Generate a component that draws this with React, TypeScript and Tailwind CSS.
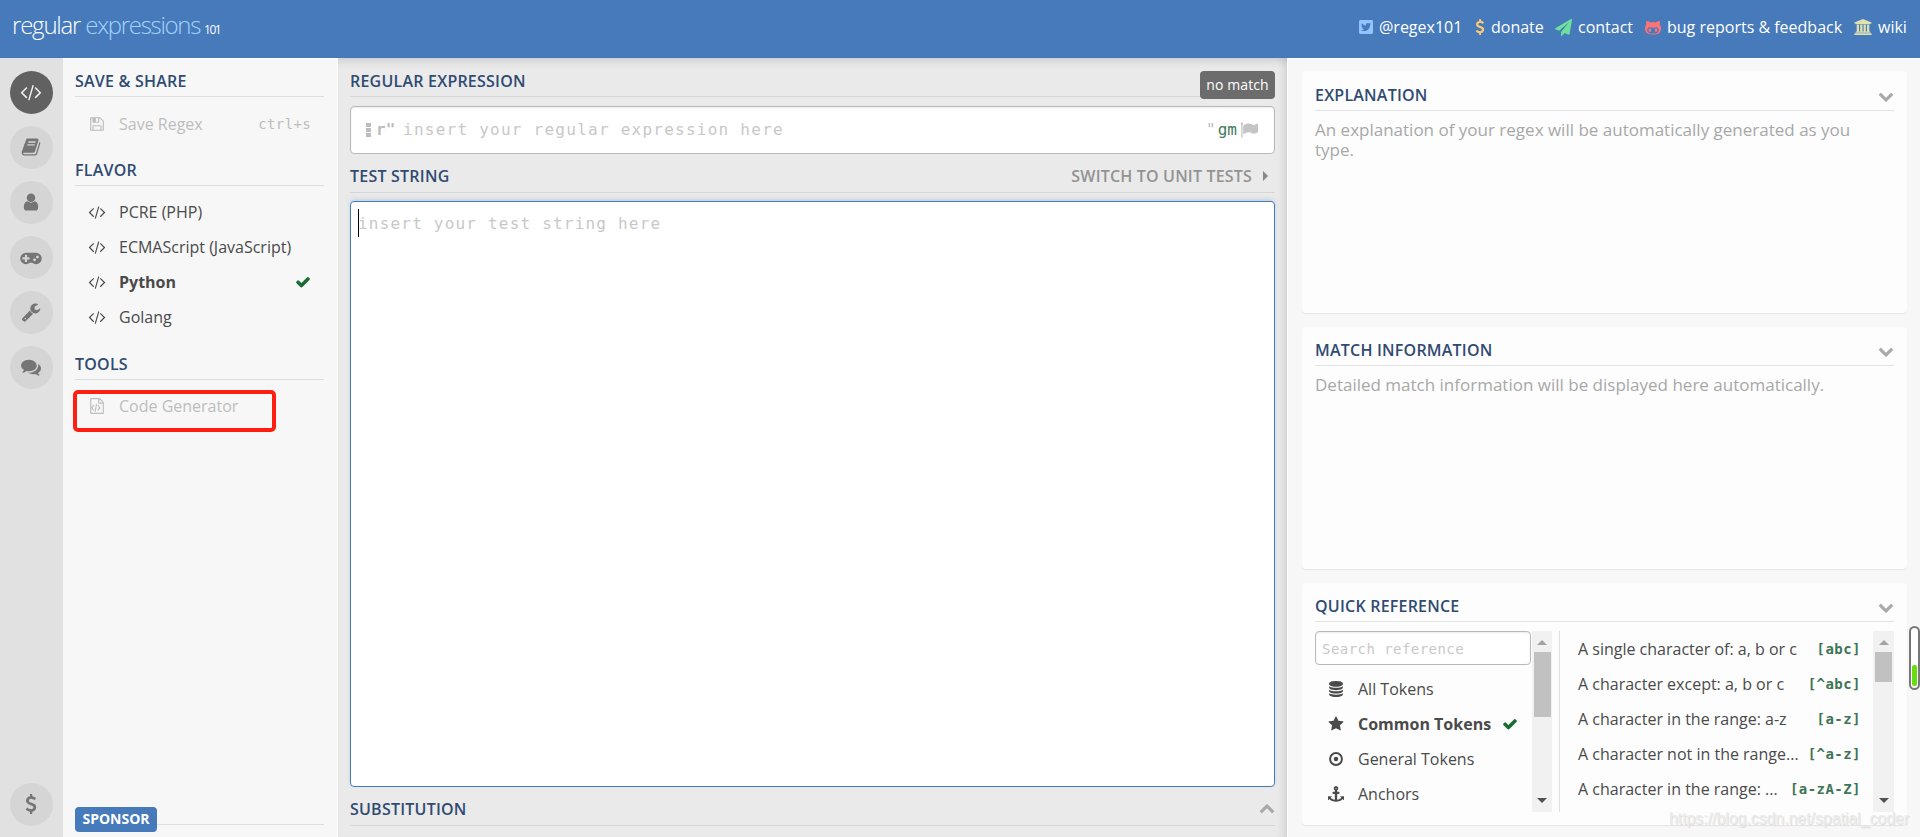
import React from "react";
import { FaTwitterSquare } from "react-icons/fa";

const paths = {
  code: "M553 1399l-50 50q-10 10-23 10t-23-10l-466-466q-10-10-10-23t10-23l466-466q10-10 23-10t23 10l50 50q10 10 10 23t-10 23l-393 393 393 393q10 10 10 23t-10 23zm591-1067l-373 1291q-4 13-15.5 19.5t-23.5 2.5l-62-17q-13-4-19.5-15.5t-2.5-24.5l373-1291q4-13 15.5-19.5t23.5-2.5l62 17q13 4 19.5 15.5t2.5 24.5zm657 651l-466 466q-10 10-23 10t-23-10l-50-50q-10-10-10-23t10-23l393-393-393-393q-10-10-10-23t10-23l50-50q10-10 23-10t23 10l466 466q10 10 10 23t-10 23z",
  book: "M1703 478q40 57 18 129l-275 906q-19 64-76.5 107.5t-122.5 43.5h-923q-77 0-148.5-53.5t-99.5-131.5q-24-67-2-127 0-4 3-27t4-37q1-8-3-21.5t-3-19.5q2-11 8-21t16.5-23.5 16.5-23.5q23-38 45-91.5t30-91.5q3-10 .5-30t-.5-28q3-11 17-28t17-23q21-36 42-92t25-90q1-9-2.5-32t.5-28q4-13 22-30.5t22-22.5q19-26 42.5-84.5t27.5-96.5q1-8-3-25.5t-2-26.5q2-8 9-18t18-23 17-21q8-12 16.5-30.5t15-35 16-36 19.5-32 26.5-23.5 36-11.5 47.5 5.5l-1 3q38-9 51-9h761q74 0 114 56t18 130l-274 906q-36 119-71.5 153.5t-128.5 34.5h-869q-27 0-38 15-11 16-1 43 24 70 144 70h923q29 0 56-15.5t35-41.5l300-987q7-22 5-57 38 15 59 43zm-1064 2q-4 13 2 22.5t20 9.5h608q13 0 25.5-9.5t16.5-22.5l21-64q4-13-2-22.5t-20-9.5h-608q-13 0-25.5 9.5t-16.5 22.5zm-83 256q-4 13 2 22.5t20 9.5h608q13 0 25.5-9.5t16.5-22.5l21-64q4-13-2-22.5t-20-9.5h-608q-13 0-25.5 9.5t-16.5 22.5z",
  user: "M1536 1399q0 109-62.5 187t-150.5 78h-854q-88 0-150.5-78t-62.5-187q0-85 8.5-160.5t31.5-152 58.5-131 94-89 134.5-34.5q131 128 313 128t313-128q76 0 134.5 34.5t94 89 58.5 131 31.5 152 8.5 160.5zm-256-887q0 159-112.5 271.5t-271.5 112.5-271.5-112.5-112.5-271.5 112.5-271.5 271.5-112.5 271.5 112.5 112.5 271.5z",
  gamepad: "M832 1088v-128q0-14-9-23t-23-9h-192v-192q0-14-9-23t-23-9h-128q-14 0-23 9t-9 23v192h-192q-14 0-23 9t-9 23v128q0 14 9 23t23 9h192v192q0 14 9 23t23 9h128q14 0 23-9t9-23v-192h192q14 0 23-9t9-23zm576 64q0-53-37.5-90.5t-90.5-37.5-90.5 37.5-37.5 90.5 37.5 90.5 90.5 37.5 90.5-37.5 37.5-90.5zm256-256q0-53-37.5-90.5t-90.5-37.5-90.5 37.5-37.5 90.5 37.5 90.5 90.5 37.5 90.5-37.5 37.5-90.5zm256 128q0 212-150 362t-362 150q-192 0-338-128h-220q-146 128-338 128-212 0-362-150t-150-362 150-362 362-150h896q212 0 362 150t150 362z",
  wrench: "M448 1472q0-26-19-45t-45-19-45 19-19 45 19 45 45 19 45-19 19-45zm644-420l-682 682q-37 37-90 37-52 0-91-37l-106-108q-38-36-38-90 0-53 38-91l681-681q39 98 114.5 173.5t173.5 114.5zm634-435q0 39-23 106-47 134-164.5 217.5t-258.5 83.5q-185 0-316.5-131.5t-131.5-316.5 131.5-316.5 316.5-131.5q58 0 121.5 16.5t107.5 46.5q16 11 16 28t-16 28l-293 169v224l193 107q5-3 79-48.5t135.5-81 70.5-35.5q15 0 23.5 10t8.5 25z",
  comments: "M1408 768q0 139-94 257t-256.5 186.5-353.5 68.5q-86 0-176-16-124 88-278 128-36 9-86 16h-3q-11 0-20.5-8t-11.5-21q-1-3-1-6.5t.5-6.5 2-6l2.5-5 3.5-5.5 4-5 4.5-5 4-4.5q5-6 23-25t26-29.5 22.5-29 25-38.5 20.5-44q-124-72-195-177t-71-224q0-139 94-257t256.5-186.5 353.5-68.5 353.5 68.5 256.5 186.5 94 257zm384 256q0 120-71 224.5t-195 176.5q10 24 20.5 44t25 38.5 22.5 29 26 29.5 23 25q1 1 4 4.5t4.5 5 4 5 3.5 5.5l2.5 5 2 6 .5 6.5-1 6.5q-3 14-13 22t-22 7q-50-7-86-16-154-40-278-128-90 16-176 16-271 0-472-132 58 4 88 4 161 0 309-45t264-129q125-92 192-212t67-254q0-77-23-152 129 71 204 178t75 230z",
  dollar: "M1362 1185q0 153-99.5 263.5t-258.5 136.5v175q0 14-9 23t-23 9h-135q-13 0-22.5-9.5t-9.5-22.5v-175q-66-9-127.5-31t-101.5-44.5-74-48-46.5-37.5-17.5-18q-17-21-2-41l103-135q7-10 23-12 15-2 24 9l2 2q113 99 243 125 37 8 74 8 81 0 142.5-43t61.5-122q0-28-15-53t-33.5-42-58.5-37.5-66-32-80-32.5q-39-16-61.5-25t-61.5-26.5-62.5-31-56.5-35.5-53.5-42.5-43.5-49-35.5-58-21-66.5-8.5-78q0-138 98-242t255-134v-180q0-13 9.5-22.5t22.5-9.5h135q14 0 23 9t9 23v176q57 6 110.5 23t87 33.5 63.5 37.5 39 29 15 14q17 18 5 38l-81 146q-8 15-23 16-14 3-27-7-3-3-14.5-12t-39-26.5-58.5-32-74.5-26-85.5-11.5q-95 0-155 43t-60 111q0 26 8.5 48t29.5 41.5 39.5 33 56 31 60.5 27 70 27.5q53 20 81 31.5t76 35 75.5 42.5 62 50 53 63.5 31.5 76.5 13 94z",
  save: "M512 1536h768v-384h-768v384zm896 0h128v-896q0-14-10-38.5t-20-34.5l-281-281q-10-10-34-20t-39-10v416q0 40-28 68t-68 28h-576q-40 0-68-28t-28-68v-416h-128v1280h128v-416q0-40 28-68t68-28h832q40 0 68 28t28 68v416zm-384-928v-320q0-13-9.5-22.5t-22.5-9.5h-192q-13 0-22.5 9.5t-9.5 22.5v320q0 13 9.5 22.5t22.5 9.5h192q13 0 22.5-9.5t9.5-22.5zm640 32v928q0 40-28 68t-68 28h-1344q-40 0-68-28t-28-68v-1344q0-40 28-68t68-28h928q40 0 88 20t76 48l280 280q28 28 48 76t20 88z",
  fileCode: "M1596 380q28 28 48 76t20 88v1152q0 40-28 68t-68 28h-1344q-40 0-68-28t-28-68v-1600q0-40 28-68t68-28h896q40 0 88 20t76 48zm-444-244v376h376q-10-29-22-41l-313-313q-12-12-41-22zm384 1528v-1024h-416q-40 0-68-28t-28-68v-416h-768v1536h1280zm-1056-896q8-11 21-12.5t24 6.5l51 38q11 8 12.5 21t-6.5 24l-182 243 182 243q8 11 6.5 24t-12.5 21l-51 38q-11 8-24 6.5t-21-12.5l-226-301q-14-19 0-38zm802 301q14 19 0 38l-226 301q-8 11-21 12.5t-24-6.5l-51-38q-11-8-12.5-21t6.5-24l182-243-182-243q-8-11-6.5-24t12.5-21l51-38q11-8 24-6.5t21 12.5zm-620 461q-13-2-20.5-13t-5.5-24l138-831q2-13 13-20.5t24-5.5l63 10q13 2 20.5 13t5.5 24l-138 831q-2 13-13 20.5t-24 5.5z",
  check: "M1671 566q0 40-28 68l-724 724-136 136q-28 28-68 28t-68-28l-136-136-362-362q-28-28-28-68t28-68l136-136q28-28 68-28t68 28l294 295 656-657q28-28 68-28t68 28l136 136q28 28 28 68z",
  chevron: "M1683 808l-742 741q-19 19-45 19t-45-19l-742-741q-19-19-19-45.5t19-45.5l166-165q19-19 45-19t45 19l531 531 531-531q19-19 45-19t45 19l166 165q19 19 19 45.5t-19 45.5z",
  star: "M1728 647q0 22-26 48l-363 354 86 500q1 7 1 20 0 21-10.5 35.5t-30.5 14.5q-19 0-40-12l-449-236-449 236q-22 12-40 12-21 0-31.5-14.5t-10.5-35.5q0-6 2-20l86-500-364-354q-25-27-25-48 0-37 56-46l502-73 225-455q19-41 49-41t49 41l225 455 502 73q56 9 56 46z",
  database: "M896 768q237 0 443-43t325-127v170q0 69-103 128t-280 93.5-385 34.5-385-34.5-280-93.5-103-128v-170q119 84 325 127t443 43zm0 768q237 0 443-43t325-127v170q0 69-103 128t-280 93.5-385 34.5-385-34.5-280-93.5-103-128v-170q119 84 325 127t443 43zm0-384q237 0 443-43t325-127v170q0 69-103 128t-280 93.5-385 34.5-385-34.5-280-93.5-103-128v-170q119 84 325 127t443 43zm0-1152q208 0 385 34.5t280 93.5 103 128v128q0 69-103 128t-280 93.5-385 34.5-385-34.5-280-93.5-103-128v-128q0-69 103-128t280-93.5 385-34.5z",
  plane: "M1764 11q33 24 27 64l-256 1536q-5 29-32 45-14 8-31 8-11 0-24-5l-453-185-242 295q-18 23-49 23-13 0-22-4-19-7-30.5-23.5t-11.5-36.5v-349l864-1059-1069 925-395-162q-37-14-40-55-2-40 32-59l1664-960q15-9 32-9 20 0 36 11z",
  github: "M640 1216q0 40-12.5 82t-43 76-72.5 34-72.5-34-43-76-12.5-82 12.5-82 43-76 72.5-34 72.5 34 43 76 12.5 82zm640 0q0 40-12.5 82t-43 76-72.5 34-72.5-34-43-76-12.5-82 12.5-82 43-76 72.5-34 72.5 34 43 76 12.5 82zm160 0q0-120-69-204t-187-84q-41 0-195 21-71 11-157 11t-157-11q-152-21-195-21-118 0-187 84t-69 204q0 88 32 153.5t81 103 122 60 140 29.5 149 7h168q82 0 149-7t140-29.5 122-60 81-103 32-153.5zm224-176q0 207-61 331-38 77-105.5 133t-141 86-170 47.5-171.5 22-167 4.5q-78 0-142-3t-147.5-12.5-152.5-30-137-51.5-121-81-86-115q-62-123-62-331 0-237 136-396-27-82-27-170 0-116 51-218 108 0 190 39.5t189 123.5q147-35 309-35 148 0 280 32 105-82 187-121t189-39q51 102 51 218 0 87-27 168 136 160 136 398z",
  university: "M832 0l960 384v128h-128q0 26-20.5 45t-48.5 19h-1526q-28 0-48.5-19t-20.5-45h-128v-128zm-704 640h256v768h128v-768h256v768h128v-768h256v768h128v-768h256v768h59q28 0 48.5 19t20.5 45v64h-1664v-64q0-26 20.5-45t48.5-19h59v-768zm1595 960q28 0 48.5 19t20.5 45v128h-1920v-128q0-26 20.5-45t48.5-19h1782z",
  anchor: "M960 256q0-26-19-45t-45-19-45 19-19 45 19 45 45 19 45-19 19-45zm832 928v352q0 22-20 30-8 2-12 2-12 0-23-9l-93-93q-119 143-318.5 226.5t-429.5 83.5-429.5-83.5-318.5-226.5l-93 93q-9 9-23 9-4 0-12-2-20-8-20-30v-352q0-14 9-23t23-9h352q22 0 30 20 8 19-7 35l-100 100q67 91 189.5 153.5t271.5 82.5v-647h-192q-26 0-45-19t-19-45v-128q0-26 19-45t45-19h192v-163q-58-34-93-92.5t-35-128.5q0-106 75-181t181-75 181 75 75 181q0 70-35 128.5t-93 92.5v163h192q26 0 45 19t19 45v128q0 26-19 45t-45 19h-192v647q149-20 271.5-82.5t189.5-153.5l-100-100q-15-16-7-35 8-20 30-20h352q14 0 23 9t9 23z",
  flag: "M320 256q0 72-64 110v1266q0 13-9.5 22.5t-22.5 9.5h-64q-13 0-22.5-9.5t-9.5-22.5v-1266q-64-38-64-110 0-53 37.5-90.5t90.5-37.5 90.5 37.5 37.5 90.5zm1472 64v763q0 25-12.5 38.5t-39.5 27.5q-215 116-369 116-61 0-123.5-22t-108.5-48-115.5-48-142.5-22q-192 0-464 146-17 9-33 9-26 0-45-19t-19-45v-742q0-32 31-55 21-14 79-43 236-120 421-120 107 0 200 29t219 88q38 19 88 19 54 0 117.5-21t110-47 88-47 54.5-21q26 0 45 19t19 45z",
};

type IconName = keyof typeof paths;

function Icon({ name, className = "", viewBox = "0 0 1792 1792" }: { name: IconName; className?: string; viewBox?: string }) {
  return (
    <svg viewBox={viewBox} className={`shrink-0 overflow-visible fill-current ${className}`} aria-hidden="true">
      <path d={paths[name]} />
    </svg>
  );
}

function DotCircle() {
  return (
    <svg viewBox="0 0 16 16" className="size-4 shrink-0" aria-hidden="true">
      <circle cx="8" cy="8" r="5.9" fill="none" stroke="currentColor" strokeWidth="2" />
      <circle cx="8" cy="8" r="2.3" fill="currentColor" />
    </svg>
  );
}

const mono = "font-['DejaVu_Sans_Mono',monospace]";

function Heading({ children }: { children: React.ReactNode }) {
  return (
    <h2 className="flex flex-1 items-center whitespace-nowrap text-[16px] font-semibold leading-[29px] tracking-[0.22px] text-[#304b72]">
      {children}
    </h2>
  );
}

function RailButton({ name, active = false, viewBox }: { name: IconName; active?: boolean; viewBox?: string }) {
  return (
    <div
      className={`flex size-[43px] items-center justify-center rounded-full pb-px pr-px ${
        active ? "bg-[#616161] text-[#f0f0f0]" : "bg-[#d5d5d5] text-[#757575]"
      }`}
    >
      <Icon name={name} viewBox={viewBox} className={name === "gamepad" ? "h-5 w-[22px]" : "size-5"} />
    </div>
  );
}

function SideItem({ icon, label, selected = false, disabled = false, hint }: {
  icon: IconName; label: string; selected?: boolean; disabled?: boolean; hint?: string;
}) {
  return (
    <div className={`flex h-[35px] items-center pl-[14px] pr-[13px] text-[16px] ${disabled ? "text-[#bdbdbd]" : "text-[#4a4a4a]"}`}>
      <Icon name={icon} className="size-4" />
      <span className={`ml-[14px] flex-1 whitespace-nowrap ${selected ? "font-bold" : ""}`}>{label}</span>
      {hint && <span className={`${mono} pt-px text-[14px] tracking-[0.35px]`}>{hint}</span>}
      {selected && <Icon name="check" className="size-4 text-[#1b6b35]" />}
    </div>
  );
}

function Card({ title, className, children }: { title: string; className: string; children: React.ReactNode }) {
  return (
    <section className={`flex shrink-0 flex-col rounded-[4px] bg-[#fdfdfd] px-[13px] shadow-[0_1px_1px_rgba(0,0,0,0.08)] ${className}`}>
      <div className="flex items-center justify-between border-b border-[#e4e4e4]">
        <Heading>{title}</Heading>
        <Icon name="chevron" className="size-4 text-[#a9a9a9]" />
      </div>
      {children}
    </section>
  );
}

function Scrollbar({ long }: { long: boolean }) {
  return (
    <div className={`flex h-[181px] shrink-0 flex-col items-center bg-[#f1f1f1] ${long ? "w-5" : "w-[21px]"}`}>
      <div className="flex h-[21px] items-center pt-[2px]">
        <svg viewBox="0 0 10 5" className="h-[5px] w-[10px] fill-[#a3a3a3]"><path d="M0 5L5 0L10 5z" /></svg>
      </div>
      <div className={`w-[17px] bg-[#c1c1c1] ${long ? "h-[65px]" : "h-[30px]"}`} />
      <div className="mt-auto flex h-[24px] items-center">
        <svg viewBox="0 0 10 5" className="h-[5px] w-[10px] fill-[#505050]"><path d="M0 0L5 5L10 0z" /></svg>
      </div>
    </div>
  );
}

const references = [
  ["A single character of: a, b or c", "[abc]"],
  ["A character except: a, b or c", "[^abc]"],
  ["A character in the range: a-z", "[a-z]"],
  ["A character not in the range...", "[^a-z]"],
  ["A character in the range: ...", "[a-zA-Z]"],
];

export default function App() {
  return (
    <div className="relative flex h-[837px] w-[1920px] flex-col overflow-hidden bg-[#f7f7f7] font-['Open_Sans',sans-serif] text-[16px]">
      <header className="flex h-[58px] shrink-0 justify-between bg-[#467abb] pl-3 pr-3 text-white">
        <div className="flex h-[52px] items-baseline whitespace-nowrap font-light">
          <span className="text-[24px] leading-[50px] tracking-[-1.2px]">regular</span>
          <span className="ml-[5px] text-[24px] leading-[50px] tracking-[-1.3px] text-[#a3d3fb]">expressions</span>
          <span className="ml-[4px] text-[12px] font-normal tracking-[-1.5px]">101</span>
        </div>
        <nav className="flex h-[54px] items-center whitespace-nowrap">
          <FaTwitterSquare className="size-4 text-[#92c5ff]" />
          <span className="ml-[5px] w-[96px]">@regex101</span>
          <Icon name="dollar" className="-ml-[3px] size-4 text-[#ffc973]" />
          <span className="ml-[3px] w-[64px]">donate</span>
          <Icon name="plane" className="size-[17px] text-[#6fe09a]" />
          <span className="ml-[6px] w-[67px]">contact</span>
          <Icon name="github" viewBox="0 60 1664 1664" className="size-4 text-[#ff7377]" />
          <span className="ml-[6px] w-[187px]">bug reports &amp; feedback</span>
          <Icon name="university" viewBox="-128 0 1920 1792" className="h-4 w-[18px] text-[#dfe2ae]" />
          <span className="ml-[6px] w-[30px]">wiki</span>
        </nav>
      </header>

      <div className="flex min-h-0 flex-1">
        <aside className="flex w-[63px] flex-col items-center gap-3 bg-[#e1e1e1] pb-[11px] pt-[13px]">
          <RailButton name="code" active />
          <RailButton name="book" />
          <RailButton name="user" />
          <RailButton name="gamepad" viewBox="0 0 1920 1792" />
          <RailButton name="wrench" />
          <RailButton name="comments" />
          <div className="mt-auto"><RailButton name="dollar" /></div>
        </aside>

        <aside className="relative flex w-[275px] flex-col border-r border-t border-white bg-[#f7f7f7] pl-3 pr-[13px]">
          <div className="flex h-[38px] items-end border-b border-[#dedede]"><Heading>SAVE &amp; SHARE</Heading></div>
          <div className="pt-[9px]"><SideItem icon="save" label="Save Regex" disabled hint="ctrl+s" /></div>
          <div className="flex h-[45px] items-end border-b border-[#dedede]"><Heading>FLAVOR</Heading></div>
          <div className="pt-[8px]">
            <SideItem icon="code" label="PCRE (PHP)" />
            <SideItem icon="code" label="ECMAScript (JavaScript)" />
            <SideItem icon="code" label="Python" selected />
            <SideItem icon="code" label="Golang" />
          </div>
          <div className="flex h-[46px] items-end border-b border-[#dedede]"><Heading>TOOLS</Heading></div>
          <div className="pt-[8px]"><SideItem icon="fileCode" label="Code Generator" disabled /></div>
          <div className="absolute left-[10px] top-[331px] h-[42px] w-[203px] rounded-[5px] border-4 border-[#ff1f12]" />
          <div className="mb-[5px] mt-auto flex h-[25px] items-center">
            <span className="flex h-[25px] w-[82px] items-center justify-center rounded-[4px] bg-[#467abb] pb-[2px] text-[14px] font-bold text-white">SPONSOR</span>
            <span className="mt-[10px] h-px flex-1 bg-[#dedede]" />
          </div>
        </aside>

        <main className="flex w-[949px] flex-col bg-[#eaeaea] pl-3 pr-3 shadow-[inset_0_8px_10px_-6px_rgba(0,0,0,0.15),inset_-8px_0_10px_-6px_rgba(0,0,0,0.12)]">
          <div className="flex h-[39px] items-end border-b border-[#d6d6d6]">
            <Heading>REGULAR EXPRESSION</Heading>
            <span className="-mb-[3px] flex h-7 w-[75px] items-center justify-center rounded-[4px] bg-[#6c6c6c] pb-px text-[14px] tracking-[0.1px] text-white">no match</span>
          </div>
          <div className="mt-[9px] flex h-12 items-center rounded-[4px] border border-[#b9b9b9] bg-white pl-[15px] pr-[15px] shadow-[inset_0_1px_2px_rgba(0,0,0,0.08)]">
            <svg viewBox="0 0 5 14" className="h-[14px] w-[5px] fill-[#bdbdbd]"><path d="M0 0h5v4h-5zM0 5h5v4h-5zM0 10h5v4h-5z" /></svg>
            <span className={`${mono} ml-[5px] w-[27px] text-[16px] font-bold text-[#bdbdbd]`}>r"</span>
            <span className={`${mono} flex-1 whitespace-nowrap text-[16px] tracking-[1.25px] text-[#c8c8c8]`}>insert your regular expression here</span>
            <span className={`${mono} text-[16px] text-[#bdbdbd]`}>"</span>
            <span className={`${mono} ml-[2px] text-[16px] text-[#457a5c]`}>gm</span>
            <Icon name="flag" className="ml-[3px] mr-px size-[18px] text-[#c4c4c4]" />
          </div>
          <div className="flex h-[39px] items-center border-b border-[#d6d6d6] pt-[6px]">
            <Heading>TEST STRING</Heading>
            <span className="text-[16px] font-semibold tracking-[0.18px] text-[#939393]">SWITCH TO UNIT TESTS</span>
            <svg viewBox="0 0 5 10" className="ml-[11px] mr-[7px] h-[10px] w-[5px] fill-[#888888]"><path d="M0 0L5 5L0 10z" /></svg>
          </div>
          <div className="mt-2 flex h-[586px] rounded-[4px] border border-[#467abb] bg-white pl-[7px] pt-[7px] shadow-[0_-2px_5px_-1px_rgba(70,122,187,0.3)]">
            <span className="h-7 w-px bg-black" />
            <span className={`${mono} -ml-px text-[16px] leading-[29px] tracking-[1.2px] text-[#c8c8c8]`}>insert your test string here</span>
          </div>
          <div className="flex h-[39px] items-center border-b border-[#d6d6d6] pt-[7px]">
            <Heading>SUBSTITUTION</Heading>
            <Icon name="chevron" className="size-4 rotate-180 text-[#a9a9a9]" />
          </div>
        </main>

        <aside className="flex w-[633px] flex-col border-l border-t border-white bg-[#f7f7f7] pl-[14px] pr-[13px] pt-3">
          <Card title="EXPLANATION" className="mb-[14px] h-[242px] pt-[10px]">
            <p className="pr-6 pt-[9px] text-[17px] leading-5 text-[#a8a8a8]">An explanation of your regex will be automatically generated as you type.</p>
          </Card>
          <Card title="MATCH INFORMATION" className="mb-[14px] h-[242px] pt-[9px]">
            <p className="pt-[9px] text-[17px] leading-5 text-[#a8a8a8]">Detailed match information will be displayed here automatically.</p>
          </Card>
          <Card title="QUICK REFERENCE" className="h-[242px] pt-[9px]">
            <div className="mt-[9px] flex h-[181px] overflow-hidden text-[#4a4a4a]">
              <div className="flex w-[216px] flex-col">
                <div className={`${mono} mb-[6px] flex h-[34px] shrink-0 items-center rounded-[4px] border border-[#b9b9b9] bg-white pl-[6px] pt-[2px] text-[14px] tracking-[0.45px] text-[#c8c8c8] shadow-[inset_0_1px_2px_rgba(0,0,0,0.08)]`}>
                  Search reference
                </div>
                <div className="flex h-[35px] shrink-0 items-center pl-[13px]"><Icon name="database" className="size-4" /><span className="ml-[14px]">All Tokens</span></div>
                <div className="flex h-[35px] shrink-0 items-center pl-[13px] pr-[13px]">
                  <Icon name="star" className="size-4" />
                  <span className="ml-[14px] flex-1 whitespace-nowrap font-bold">Common Tokens</span>
                  <Icon name="check" className="size-4 text-[#1b6b35]" />
                </div>
                <div className="flex h-[35px] shrink-0 items-center pl-[13px]"><DotCircle /><span className="ml-[14px]">General Tokens</span></div>
                <div className="flex h-[35px] shrink-0 items-center pl-[13px]"><Icon name="anchor" className="size-4" /><span className="ml-[14px]">Anchors</span></div>
              </div>
              <div className="ml-px mr-[7px]"><Scrollbar long /></div>
              <div className="flex flex-1 flex-col border-l border-[#e0e0e0] pl-[18px] pr-[12px]">
                {references.map(([text, code]) => (
                  <div key={code} className="flex h-[35px] shrink-0 items-center justify-between whitespace-nowrap">
                    <span>{text}</span>
                    <span className={`${mono} pt-px text-[14px] font-bold tracking-[0.45px] text-[#3f7556]`}>{code}</span>
                  </div>
                ))}
              </div>
              <Scrollbar long={false} />
            </div>
          </Card>
        </aside>
      </div>

      <div className="absolute left-[1909px] top-[626px] flex h-16 w-[11px] items-end justify-center rounded-[6px] border-2 border-[#777777] bg-white pb-[2px]">
        <div className="h-[21px] w-[5px] rounded-[2px] bg-[#66dd11]" />
      </div>
      <div className="absolute left-[1669px] top-[807px] whitespace-nowrap font-['Liberation_Sans',sans-serif] text-[16px] leading-6 tracking-[-0.08px] text-[#ececec] [text-shadow:1px_1px_1px_#dadada]">
        https://blog.csdn.net/spatial_coder
      </div>
    </div>
  );
}
